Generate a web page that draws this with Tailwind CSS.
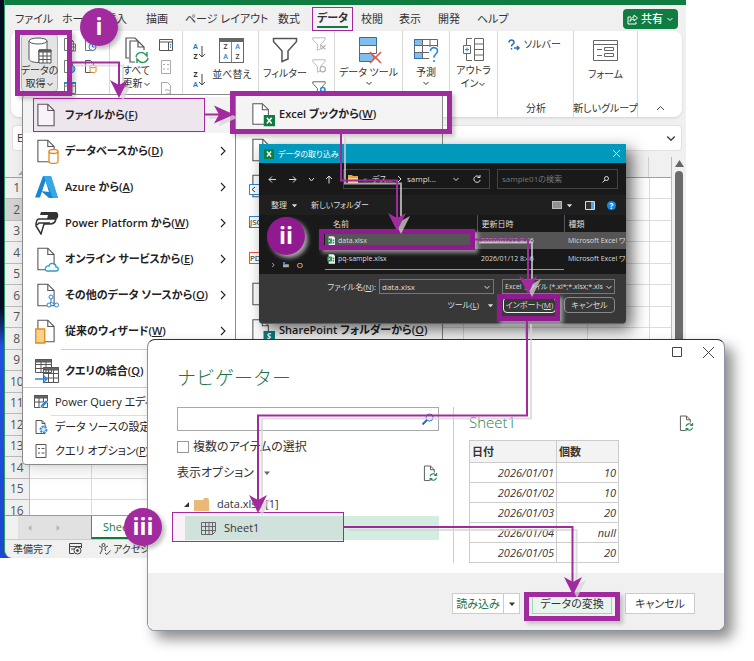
<!DOCTYPE html>
<html lang="ja">
<head>
<meta charset="utf-8">
<title>Excel ブックからデータを取り込む手順</title>
<script src="https://cdn.jsdelivr.net/npm/@tailwindcss/browser@4"></script>
</head>
<body class="bg-white text-[#333] font-['Open_Sans','Noto_Sans_CJK_JP',sans-serif] [font-feature-settings:'palt']">

<svg class="hidden" aria-hidden="true">
  <symbol id="doc" viewBox="0 0 20 26"><path d="M1 1h11l7 7v17H1z" fill="#fff" stroke="#555" stroke-width="1.2"/><path d="M12 1v7h7" fill="none" stroke="#555" stroke-width="1.2"/></symbol>
  <symbol id="down" viewBox="0 0 8 8"><path d="M1.500 3 4 5.500l2.500-2.500" fill="none" stroke="currentColor"/></symbol>
  <symbol id="right" viewBox="0 0 8 12"><path d="M2 2l4 4-4 4" fill="none" stroke="currentColor" stroke-width="1.100"/></symbol>
  <symbol id="caret" viewBox="0 0 8 8"><path d="M1 2.500h6L4 6z" fill="currentColor"/></symbol>
  <symbol id="xl" viewBox="0 0 12 12"><path d="M0 0h12v12H0z" fill="#107c41"/><path d="M3.500 3l5 6m0-6l-5 6" stroke="#fff" stroke-width="1.600"/></symbol>
  <symbol id="funnel" viewBox="0 0 26 26"><path d="M1.500 1.500h23v3L16 14v8l-6 2.500V14L1.500 4.500z" fill="none" stroke="currentColor" stroke-width="1.500"/></symbol>
  <symbol id="docsync" viewBox="0 0 16 18"><path d="M7 16.500H1.500V1H8l4 4v3M8 1v4h4" fill="none" stroke="#555"/><path d="M7.500 12a3.500 3.500 0 0 1 6-1.500M14.500 8.500v2.500H12M14.500 13.500a3.500 3.500 0 0 1-6 1.500M7.500 17v-2.500H10" fill="none" stroke="#2e8b57" stroke-width="1.200"/></symbol>
  <symbol id="sheetfile" viewBox="0 0 10 12"><path d="M2 0h6l2 2v10H2z" fill="#eee"/><path d="M0 3h6v6H0z" fill="#107c41"/><path d="M1.500 4.500l3 3m0-3l-3 3" stroke="#fff"/><path d="M7 4h2v2H7zm0 3h2v2H7z" fill="#21a366"/></symbol>
</svg>

<main class="relative w-full min-h-[661px] overflow-hidden">

  <!-- Desktop and Excel window -->
  <div class="absolute left-0 top-0 w-[686px] h-[558px] pl-1 bg-linear-to-b from-[#070b22] from-55% via-[#2350e0] via-62% to-[#1b48d0]">
    <section class="h-full flex flex-col bg-[#f0f0f0] border-l border-[#2b9a63] rounded-bl-lg overflow-hidden" aria-label="Excel">
      <div class="h-[5px] shrink-0 bg-[#107c41]"></div>

      <nav class="h-[26px] shrink-0 flex items-center pl-[10px] pr-2 pt-[2px] text-[11px] leading-4 whitespace-nowrap">
        <a href="#" class="w-[47px]">ファイル</a>
        <a href="#" class="w-[43px]">ホーム</a>
        <a href="#" class="w-[41px]">挿入</a>
        <a href="#" class="w-[39px]">描画</a>
        <a href="#" class="w-[93px]">ページ レイアウト</a>
        <a href="#" class="w-[34px]">数式</a>
        <a href="#" class="w-[41px] h-6 mr-2 border border-[#a12a9e] bg-[#f5f1f5] flex justify-center items-center font-bold"><span class="border-b-2 border-[#107c41]">データ</span></a>
        <a href="#" class="w-[38px]">校閲</a>
        <a href="#" class="w-[39px]">表示</a>
        <a href="#" class="w-[39px]">開発</a>
        <a href="#">ヘルプ</a>
        <button class="ml-auto h-5 w-[55px] rounded bg-[#107c41] text-white flex items-center justify-center gap-[3px] font-medium">
          <svg class="size-[11px]" viewBox="0 0 11 11" fill="none" stroke="#fff"><path d="M4 3H1v7h8V8M3 7.500c0-3 2-4.500 4-4.500V1l3.500 3L7 7V5C5.500 5 4 5.500 3 7.500z"/></svg>共有<svg class="size-2"><use href="#down"/></svg>
        </button>
      </nav>

      <div class="ml-[6px] mr-1 h-[86px] shrink-0 flex bg-white rounded-lg shadow text-[10px] leading-[13px] whitespace-nowrap">
        <div class="w-[98px] shrink-0 flex pl-[10px] pt-[3px]">
          <button class="w-[37px] h-[58px] bg-[#e4e4e4] border border-[#b5b5b5] rounded-sm flex flex-col items-center pt-[2px]">
            <svg class="w-6 h-[27px] shrink-0" viewBox="0 0 24 27" fill="#fff" stroke="#555"><path d="M1 4v18c0 2 4 3.500 9 3.500h1V13h8V4"/><ellipse cx="10" cy="4" rx="9" ry="3"/><path d="M11 13h12v13H11zM11 19h12M11 22.500h12M15 13v13M19 13v13"/><path d="M11 13h12v2H11z" fill="#666"/></svg>
            <span>データの</span><span class="flex items-center">取得<svg class="size-2"><use href="#down"/></svg></span>
          </button>
          <div class="ml-[6px] mt-1 grid grid-cols-2 gap-x-[9px] gap-y-2 content-start">
            <svg class="w-3 h-[14px]" viewBox="0 0 12 14" fill="#fff" stroke="#777"><path d="M.5.5h6l3 3v9h-9zM6.500.5v3h3M4 6h7.500v7H4zM4 9h7.500M7.500 6v7"/></svg>
            <svg class="w-3 h-[14px]" viewBox="0 0 12 14" fill="#fff" stroke="#777"><path d="M.5.5h5l3 3v9h-8z"/><circle cx="7.500" cy="9" r="3.500" stroke="#2b88d8"/><path d="M7.500 7v2h2" stroke="#2b88d8"/></svg>
            <svg class="w-3 h-[14px]" viewBox="0 0 12 14" fill="#fff" stroke="#777"><path d="M.5.5h5l3 3v9h-8z"/><circle cx="7.500" cy="9" r="3.500" fill="#9bd" stroke="#2b88d8"/></svg>
            <svg class="w-3 h-[14px]" viewBox="0 0 12 14" fill="#fff" stroke="#555"><path d="M.5.5h5l3 3v9h-8z"/><path d="M5 6.500v5c0 1.500 6 1.500 6 0v-5" stroke="#e08a1e"/><ellipse cx="8" cy="6.500" rx="3" ry="1.300" stroke="#e08a1e"/></svg>
            <svg class="w-3 h-3" viewBox="0 0 12 12" fill="#fff" stroke="#777"><path d="M.5.5h11v11H.5zM.5 4h11M4 0v12M8 0v12"/><path d="M0 0h12v2H0z" fill="#2b88d8" stroke="none"/></svg>
          </div>
        </div>
        <div class="w-[73px] shrink-0 flex pt-[6px] pl-3 border-l border-[#d8d8d8] gap-2">
          <button class="w-[29px] h-[58px] flex flex-col items-center">
            <svg class="w-6 h-[27px] shrink-0" viewBox="0 0 24 27" fill="none" stroke="#555" stroke-width="1.200"><path d="M4 21H1V1h9l3 3M10 25H5V4h8l6 6v3M13 4v6h6"/><path d="M11 20c1-5 7-6 10-2l1 1v-4M23 21c-1 5-7 6-10 2l-1-1v4" stroke="#2e9a5c" stroke-width="1.500"/></svg>
            <span>すべて</span><span class="flex items-center">更新<svg class="size-2"><use href="#down"/></svg></span>
          </button>
          <div class="flex flex-col gap-2 pt-[2px]">
            <svg class="w-[15px] h-[13px]" viewBox="0 0 15 13" fill="#fff" stroke="#555"><path d="M.5.5h13v11H.5zM.5 3h13M9.500 3v8.500"/><path d="M11.500 5v5" stroke="#2b88d8" stroke-dasharray="1.500 1"/></svg>
            <svg class="w-[15px] h-[14px]" viewBox="0 0 15 14" fill="#fff" stroke="#aaa"><path d="M2.500.5h9v13h-9zM4 4.500h2m2 0h2M4 9h2m2 0h2"/></svg>
            <svg class="w-[15px] h-[13px]" viewBox="0 0 15 13" fill="#fff" stroke="#aaa"><path d="M2.500.5h6l3 3v9h-9z"/><path d="M6 8h3c3 0 3 4 0 4H7" /></svg>
          </div>
        </div>
        <div class="w-[76px] shrink-0 flex border-l border-[#d8d8d8] pt-[7px] pl-[10px] gap-1">
          <div class="flex flex-col gap-2 pt-[4px]">
            <button class="flex items-center text-[7px] leading-[10px] font-bold"><span class="flex flex-col"><span class="text-[#1f7fc4]">A</span><span>Z</span></span><svg class="w-2 h-4" viewBox="0 0 8 16" fill="none" stroke="#444"><path d="M4 2v11M1 10l3 3 3-3"/></svg></button>
            <button class="flex items-center text-[7px] leading-[10px] font-bold"><span class="flex flex-col"><span>Z</span><span class="text-[#1f7fc4]">A</span></span><svg class="w-2 h-4" viewBox="0 0 8 16" fill="none" stroke="#444"><path d="M4 2v11M1 10l3 3 3-3"/></svg></button>
          </div>
          <button class="flex flex-col items-center h-[50px] w-[44px]">
            <span class="w-[25px] h-[25px] mb-[5px] shrink-0 border border-t-4 border-[#666] grid grid-cols-2 text-[7px] leading-[10px] font-semibold"><span class="border-r border-[#888]">Z</span><span class="text-[#1f7fc4]">A</span><span class="border-r border-[#888] text-[#1f7fc4]">A</span><span>Z</span></span>
            <span>並べ替え</span>
          </button>
        </div>
        <div class="w-[76px] shrink-0 flex border-l border-[#d8d8d8] pt-[6px] pl-[5px] gap-[6px]">
          <button class="flex flex-col items-center w-[42px] h-[50px]"><svg class="size-[26px] mb-1 shrink-0 text-[#555]"><use href="#funnel"/></svg><span>フィルター</span></button>
          <div class="flex flex-col gap-2">
            <svg class="size-[14px] text-[#aaa]" viewBox="0 0 26 26"><use href="#funnel"/><path d="M17 15l8 8m0-8l-8 8" stroke="#aaa" stroke-width="2"/></svg>
            <svg class="size-[14px] text-[#aaa]" viewBox="0 0 26 26"><use href="#funnel"/><circle cx="20" cy="19" r="5" fill="#fff" stroke="#aaa" stroke-width="2"/></svg>
            <svg class="size-[14px] text-[#444]" viewBox="0 0 26 26"><use href="#funnel"/><circle cx="20" cy="16" r="4" fill="#fff" stroke="#2b88d8" stroke-width="3"/></svg>
          </div>
        </div>
        <button class="w-[68px] shrink-0 h-[86px] flex flex-col items-center border-l border-[#d8d8d8] pt-[6px]">
          <svg class="w-[26px] h-[27px] mb-[2px] shrink-0" viewBox="0 0 26 27" fill="#83bdec" stroke="#2f6fb0"><path d="M3.500.5h17v8h-17zM3.500 16.500h12l3 5-3 3h-12z"/><path d="M3.500 8.500h17v8h-17z" fill="#fff" stroke="#666"/><path d="M14 15l11 11M25 15L14 26" stroke="#e8543f" stroke-width="1.600"/></svg>
          <span>データ ツール</span><svg class="size-2"><use href="#down"/></svg>
        </button>
        <button class="w-[47px] shrink-0 h-[86px] flex flex-col items-center border-l border-[#d8d8d8] pt-[6px]">
          <svg class="w-[27px] h-[27px] mb-[2px] shrink-0" viewBox="0 0 27 27" fill="#fff" stroke="#666"><path d="M1.500 2.500h23v19h-23z"/><path d="M1.500 2.500h8v6h-8zM1.500 15.500h8v6h-8z" fill="#83bdec" stroke="#2f6fb0"/><path d="M9.500 2.500v19M17 2.500v19M1.500 8.500h23M1.500 15.500h23"/><path d="M16 10h10v16H16z" stroke="none"/><path d="M17.500 14c0-5 7-4 7 0 0 3-3.500 3-3.500 6.500M21 23v2" fill="none" stroke="#2b88d8" stroke-width="1.600"/></svg>
          <span>予測</span><svg class="size-2"><use href="#down"/></svg>
        </button>
        <button class="w-[48px] shrink-0 h-[86px] flex flex-col items-center border-l border-[#d8d8d8] pt-[6px]">
          <svg class="w-6 h-[27px] shrink-0" viewBox="0 0 24 27" fill="none" stroke="#666"><path d="M12.500 1.500h9v22h-9zM12.500 7h9M12.500 12.500h9M12.500 18h9M10 1.500H4.500V8M4.500 17v6.500H10M1.500 8.500h7v8h-7z"/><path d="M3 12.500h4M5 10.500v4" stroke="#2b88d8"/></svg>
          <span>アウトラ</span><span class="flex items-center">イン<svg class="size-2"><use href="#down"/></svg></span>
        </button>
        <div class="w-[76px] shrink-0 flex flex-col justify-between border-l border-[#d8d8d8] pt-[7px] pb-[2px] pl-[10px]">
          <button class="flex items-center gap-1"><svg class="w-3 h-3" viewBox="0 0 12 12" fill="none" stroke="#2a6cb8" stroke-width="1.500"><path d="M1 3.500C1 0 6 .5 6 3.500 6 5.500 3.500 5 3.500 7.500M3.500 9v1.500M6 9h5M9 7l2 2-2 2"/></svg>ソルバー</button>
          <span class="ml-[18px]">分析</span>
        </div>
        <div class="w-[65px] shrink-0 flex flex-col items-center justify-between border-l border-r border-[#d8d8d8] pt-[9px] pb-[2px]">
          <button class="flex flex-col items-center"><svg class="w-[25px] h-[21px] mb-[7px]" viewBox="0 0 25 21" fill="#fff" stroke="#666"><path d="M.5.5h24v20H.5zM.5 4.500h24M4 9.500h5M4 15.500h5M11.500 7.500h9v3h-9zM11.500 13.500h9v3h-9z"/></svg>フォーム</button>
          <span>新しいグループ</span>
        </div>
        <button class="flex-1 flex items-end justify-center pb-1" aria-label="リボンを折りたたむ"><svg class="w-[9px] h-[9px]" viewBox="0 0 9 9" fill="none" stroke="#444"><path d="M1 6l3.500-3.500L8 6"/></svg></button>
      </div>

      <div class="ml-[7px] mr-1 mt-2 h-[26px] shrink-0 flex items-center justify-between bg-white rounded border border-[#e0e0e0] px-1 text-[11px]">
        <span>E1</span><svg class="w-[12px] h-[12px] text-[#444]"><use href="#down"/></svg>
      </div>

      <div class="flex-1 min-h-0 flex mt-[6px]">
        <div class="flex-1 min-w-0 overflow-hidden">
          <div class="h-[21px] flex border-b border-[#a0a0a0]"><span class="w-[24px] h-full flex items-end justify-end p-[2px]"><span class="size-[9px] bg-[#aaa] [clip-path:polygon(100%_0,100%_100%,0_100%)]"></span></span><span class="flex-1 h-full bg-[repeating-linear-gradient(90deg,transparent_0_61px,#cfcfcf_61px_62px)]"></span></div>
          <table class="w-full h-[344px] table-fixed border-collapse bg-white text-[12px] leading-[14px]"><tbody id="rows"></tbody></table>
        </div>
        <div class="w-[15px] flex flex-col items-center border-l border-[#bbb] pt-[3px]">
          <svg class="w-[9px] h-[7px] shrink-0" viewBox="0 0 9 7"><path d="M4.500 0L9 7H0z" fill="#666"/></svg>
          <span class="flex-1 w-2 mt-[4px] rounded-t bg-[#6b6b6b]"></span>
        </div>
      </div>

      <div class="h-6 shrink-0 flex border-t border-[#999] text-[11px]">
        <span class="ml-[13px] w-[73px] bg-[#e1e1e1] flex items-center gap-5 pl-2 text-[#b5b5b5]"><svg class="size-2 rotate-90"><use href="#caret"/></svg><svg class="size-2 -rotate-90"><use href="#caret"/></svg></span>
        <a href="#" class="w-[90px] bg-white border-l border-b-2 border-l-[#777] border-b-[#107c41] text-[#107c41] pl-[11px] leading-[22px]">Sheet1</a>
      </div>
      <div class="h-[19px] shrink-0 flex items-center border-t border-[#ccc] pl-2 gap-4 text-[10px] leading-4">
        <span>準備完了</span>
        <svg class="w-[13px] h-3" viewBox="0 0 13 12" fill="none" stroke="#444"><path d="M5 10.500H.5V.5h12V5M.5 3.500h12M2 6h3"/><circle cx="8.500" cy="7.500" r="3.500"/><circle cx="8.500" cy="7.500" r="1" fill="#444"/></svg>
        <span class="flex items-center gap-[2px]"><svg class="w-[13px] h-3" viewBox="0 0 13 12" fill="none" stroke="#444"><circle cx="5.500" cy="2" r="1.500"/><path d="M1 3l3 1.500V7l-2 4M10 3L7 4.500V7l1 1M7 10l2 1.500 3.500-4"/></svg>アクセシビリティ</span>
      </div>
    </section>
  </div>

  <!-- Get-data menu -->
  <div class="absolute left-[22px] top-[94px] w-[214px] bg-white border border-[#8a8a8a] rounded-sm shadow-lg pb-[1px] text-[11px] leading-4 font-semibold text-[#222] whitespace-nowrap" role="menu">
    <div class="pt-[2px]">
      <button class="w-full h-9 flex items-center gap-[6px] pl-3 pr-2 bg-[#f3f3f3]"><svg class="w-6 h-[26px] shrink-0" viewBox="0 0 24 26"><use href="#doc" x="2" width="18" height="26"/></svg><span>ファイルから(<u>F</u>)</span></button>
      <button class="w-full h-9 flex items-center gap-[6px] pl-3 pr-2"><svg class="w-6 h-[26px] shrink-0" viewBox="0 0 24 26"><use href="#doc" x="2" width="18" height="26"/><path d="M14 13.500v10c0 2.500 9 2.500 9 0v-10" fill="#fff" stroke="#e08a1e" stroke-width="1.300"/><ellipse cx="18.500" cy="13.500" rx="4.500" ry="2" fill="#fff" stroke="#e08a1e" stroke-width="1.300"/></svg><span>データベースから(<u>D</u>)</span><svg class="w-2 h-3 ml-auto"><use href="#right"/></svg></button>
      <button class="w-full h-9 flex items-center gap-[6px] pl-3 pr-2"><svg class="w-6 h-6 shrink-0" viewBox="0 0 24 24"><path d="M8 1h8l7 22h-9L6 16l8 1L10.500 6 5 22.500H0z" fill="#1a86d0"/><path d="M8.500 1H16L23 23h-5z" fill="#35a8e8"/></svg><span>Azure から(<u>A</u>)</span><svg class="w-2 h-3 ml-auto"><use href="#right"/></svg></button>
      <button class="w-full h-9 flex items-center gap-[6px] pl-3 pr-2"><svg class="w-6 h-6 shrink-0" viewBox="0 0 24 24"><path d="M6 1h15c3 0 3 7 0 7H12l1-4H5z" fill="#333"/><path d="M4 8h17c-1 5-4 5-6 5H9l-3 10-5-8c0-4 1-7 3-7zM2 14l2-2h11" fill="#fff" stroke="#333" stroke-width="1.500"/></svg><span>Power Platform から(<u>W</u>)</span><svg class="w-2 h-3 ml-auto"><use href="#right"/></svg></button>
      <button class="w-full h-9 flex items-center gap-[6px] pl-3 pr-2"><svg class="w-6 h-[26px] shrink-0" viewBox="0 0 24 26"><use href="#doc" x="2" width="18" height="26"/><path d="M12 25h9c3 0 3-4 0-4 0-4-6-5-7-1-4-1-5 5-2 5z" fill="#fff" stroke="#2b9bd8" stroke-width="1.300"/></svg><span>オンライン サービスから(<u>E</u>)</span><svg class="w-2 h-3 ml-auto"><use href="#right"/></svg></button>
      <button class="w-full h-9 flex items-center gap-[6px] pl-3 pr-2"><svg class="w-6 h-[26px] shrink-0" viewBox="0 0 24 26"><use href="#doc" x="2" width="18" height="26"/><path d="M16 16v4l-3 3m3-3 5 3" stroke="#2b88d8" fill="none"/><g fill="#fff" stroke="#2b88d8"><circle cx="16" cy="15" r="2"/><circle cx="14" cy="23" r="2"/><circle cx="21.500" cy="23" r="2"/></g></svg><span>その他のデータ ソースから(<u>O</u>)</span><svg class="w-2 h-3 ml-auto"><use href="#right"/></svg></button>
      <button class="w-full h-9 flex items-center gap-[6px] pl-3 pr-2"><svg class="w-6 h-[26px] shrink-0" viewBox="0 0 24 26"><use href="#doc" x="2" width="18" height="26"/><path d="M.7 11h9v14h-9z" fill="#fbd08a" stroke="#e08a1e" stroke-width="1.300"/></svg><span>従来のウィザード(<u>W</u>)</span><svg class="w-2 h-3 ml-auto"><use href="#right"/></svg></button>
    </div>
    <button class="w-full h-[38px] flex items-center gap-[6px] pl-3 pr-2 pt-[5px] bg-[linear-gradient(#ccc,#ccc)] bg-[length:100%_1px] bg-no-repeat bg-[position:38px_0]"><svg class="w-6 h-[26px] shrink-0" viewBox="0 0 24 26" fill="#fff" stroke="#555"><path d="M.5 1.500h16v13H.5zM.5 6.500h16M.5 10.500h16M6 1.500v13M11 1.500v13M8.500 9.500h15v15h-15zM8.500 15.500h15M8.500 20h15M13.500 9.500v15M18.500 9.500v15"/><path d="M.5 1.500h16V4H.5zM8.500 9.500h15V12h-15z" fill="#666"/><path d="M0 21h12M8 17l4 4-4 4" fill="none" stroke="#2b88d8" stroke-width="1.300"/></svg><span>クエリの結合(<u>Q</u>)</span></button>
    <button class="w-full h-7 flex items-center gap-[7px] pl-[11px] border-t border-[#ccc] font-normal"><svg class="w-[14px] h-[14px] shrink-0" viewBox="0 0 14 14" fill="#fff" stroke="#555"><path d="M.5.5h13v12H.5zM.5 7h13M5 3v9.500M9.500 3v9.500"/><path d="M.5.5h13V3H.5z" fill="#666"/><path d="M6 13l1-3 5-5 2 2-5 5z" fill="#2b88d8" stroke="#fff" stroke-width=".5"/></svg><span>Power Query エディターの起動</span></button>
    <button class="w-full h-6 flex items-center gap-[7px] pl-[11px] font-normal bg-[linear-gradient(#ddd,#ddd)] bg-[length:100%_1px] bg-no-repeat bg-[position:28px_0]"><svg class="w-[14px] h-[14px] shrink-0" viewBox="0 0 14 14" fill="#fff" stroke="#555"><path d="M2 .5h6l3 3v10H2zM8 .5v3h3"/><circle cx="9.500" cy="9.500" r="3" fill="#cce6fa" stroke="#2b88d8" stroke-width="2" stroke-dasharray="2 1"/></svg><span>データ ソースの設定(<u>S</u>)...</span></button>
    <button class="w-full h-6 flex items-center gap-[7px] pl-[11px] font-normal"><svg class="w-[14px] h-[14px] shrink-0" viewBox="0 0 14 14" fill="#fff" stroke="#555"><path d="M2 .5h10v13H2zM4 4.500h2m1.500 0h3M4 9h2m1.500 0h3"/></svg><span>クエリ オプション(<u>P</u>)</span></button>
  </div>

  <!-- From-file submenu -->
  <div class="absolute left-[235px] top-[95px] w-[208px] h-[260px] bg-white border border-[#8a8a8a] text-[11px] leading-4 font-semibold text-[#222] whitespace-nowrap" role="menu">
    <button class="w-full h-9 flex items-center gap-1 pl-4 bg-[#f4f4f4]"><svg class="w-[23px] h-[26px] shrink-0" viewBox="0 0 24 26"><use href="#doc" width="18" height="26"/><use href="#xl" x="12" y="14" width="12" height="12"/></svg><span>Excel ブックから(<u>W</u>)</span></button>
    <div class="h-9 flex items-center pl-4"><svg class="w-[18px] h-6"><use href="#doc"/></svg></div>
    <div class="h-9 flex items-center pl-[13px]"><svg class="w-6 h-6" viewBox="0 0 24 24"><use href="#doc" x="3" width="18" height="24"/><path d="M.5 10.500h20v10H.5z" fill="#fff" stroke="#2b88d8"/><path d="M6 13l-3 2.500L6 18" fill="none" stroke="#333"/></svg></div>
    <div class="h-9 flex items-center pl-[13px]"><span class="w-6 h-3 border border-[#2b88d8] bg-white text-[8px] leading-[10px] font-normal">JSON</span></div>
    <div class="h-9 flex items-center pl-[13px]"><span class="w-6 h-3 border border-[#e8543f] bg-white text-[8px] leading-[10px] font-normal">PDF</span></div>
    <div class="h-9 flex items-center pl-4"><svg class="w-[18px] h-6"><use href="#doc"/></svg></div>
    <button class="w-full h-9 flex items-center gap-1 pl-4"><svg class="w-[23px] h-[26px] shrink-0" viewBox="0 0 24 26"><use href="#doc" width="18" height="26"/><path d="M12 14h12v12H12z" fill="#0b8080"/><path d="M20 17c-4-1-4 2-2 2.500s1 3-2 2" fill="none" stroke="#fff" stroke-width="1.400"/></svg><span>SharePoint フォルダーから(<u>O</u>)</span></button>
  </div>

  <!-- File import dialog -->
  <section class="absolute left-[259px] top-[144px] w-[367px] bg-[#383838] text-[#ddd] text-[8px] leading-[10px] whitespace-nowrap overflow-hidden rounded-b-sm border-b border-[#28788a] shadow-[6px_6px_16px_rgba(0,0,0,.6)]" aria-label="データの取り込み">
    <header class="h-[19px] bg-[#0099bc] flex items-center gap-1 pl-[5px] pr-[6px] text-white">
      <svg class="size-[10px]"><use href="#xl"/></svg>データの取り込み
      <button class="ml-auto" aria-label="閉じる"><svg class="size-[7px]" viewBox="0 0 7 7" stroke="#fff"><path d="M0 0l7 7M7 0L0 7"/></svg></button>
    </header>
    <div class="h-8 bg-[#191919] flex items-center pl-[9px] pr-2">
      <svg class="w-[66px] h-[9px]" viewBox="0 0 66 9" fill="none" stroke="#ddd"><path d="M8 4.500H1M4 1.500l-3 3 3 3"/><path d="M21 4.500h7M25 1.500l3 3-3 3"/><path d="M41 3l2.500 3L46 3"/><path d="M61 8.500V1M58 4l3-3 3 3"/></svg>
      <div class="ml-[9px] w-[147px] h-5 border border-[#444] flex items-center gap-[5px] px-1">
        <svg class="w-[10px] h-2" viewBox="0 0 10 8"><path d="M0 0h4l1 1h5v7H0z" fill="#e8a33d"/><path d="M0 3h10v5H0z" fill="#ffd27a"/></svg>
        <span>«</span><span>デス...</span><svg class="w-1 h-2" viewBox="0 0 4 8" fill="none" stroke="#ddd"><path d="M0 1l3 3-3 3"/></svg><span>sampl...</span>
        <svg class="size-2 ml-auto mr-2"><use href="#down"/></svg>
        <svg class="size-2 mr-1" viewBox="0 0 8 8" fill="none" stroke="#ddd"><path d="M6.500 2A3.200 3.200 0 1 0 7.200 5M7 0v2.500H4.500"/></svg>
      </div>
      <label class="ml-auto w-[121px] h-5 border border-[#444] flex items-center justify-between pl-1 pr-2">
        <input class="w-20 bg-transparent placeholder:text-[#777]" placeholder="sample01の検索" aria-label="検索">
        <svg class="size-[7px]" viewBox="0 0 7 7" fill="none" stroke="#ddd"><circle cx="4.500" cy="2.500" r="2"/><path d="M3 4L.5 6.500"/></svg>
      </label>
    </div>
    <div class="h-5 bg-[#1f1f1f] flex items-center pl-3 pr-[10px]">
      <button class="flex items-center gap-1">整理<svg class="size-[7px]"><use href="#caret"/></svg></button>
      <button class="ml-[13px]">新しいフォルダー</button>
      <svg class="ml-auto w-[10px] h-2" viewBox="0 0 10 8"><path d="M0 0h10v8H0z" fill="#bbb"/><path d="M1 2h8M1 4h8M1 6h8" stroke="#444" stroke-width=".7"/></svg>
      <svg class="size-[7px] ml-1 mr-3"><use href="#caret"/></svg>
      <svg class="w-[10px] h-[9px] mr-3" viewBox="0 0 10 9"><path d="M.5.5h9v8h-9z" fill="#333" stroke="#ddd"/><path d="M6 1h3v7H6z" fill="#4aa8f0"/></svg>
      <span class="size-[9px] rounded-full bg-[#1a86e0] text-white text-center leading-[9px] font-bold">?</span>
    </div>
    <div class="h-[59px] bg-[#191919] flex">
      <div class="w-[44px] shrink-0 pl-[13px] flex flex-col justify-end pb-1">
        <span class="flex items-center gap-2"><svg class="w-1 h-2" viewBox="0 0 4 8" fill="none" stroke="#ddd"><path d="M0 1l3 3-3 3"/></svg><svg class="w-2 h-2" viewBox="0 0 8 8"><path d="M0 3h8v4H0z" fill="#aaa"/><path d="M0 0h3v3H0z" fill="#2b88d8"/></svg>O</span>
      </div>
      <div class="ml-[22px] flex-1 min-w-0">
        <table class="w-full table-fixed text-left">
          <thead><tr class="h-[17px]"><th class="w-[152px] pl-2 font-normal">名前</th><th class="w-[87px] pl-1 font-normal border-l border-[#555]">更新日時</th><th class="pl-1 font-normal border-l border-[#555]">種類</th></tr></thead>
          <tbody class="text-[7px]">
            <tr class="h-[17px] bg-[#555]"><td class="pl-[2px]"><span class="flex items-center gap-[3px]"><svg class="w-2 h-[10px]"><use href="#sheetfile"/></svg>data.xlsx</span></td><td class="pl-1">2026/01/12 8:46</td><td class="pl-1">Microsoft Excel ワ..</td></tr>
            <tr class="h-[19px]"><td class="pl-[2px]"><span class="flex items-center gap-[3px]"><svg class="w-2 h-[10px]"><use href="#sheetfile"/></svg>pq-sample.xlsx</span></td><td class="pl-1">2026/01/12 8:46</td><td class="pl-1">Microsoft Excel ワ..</td></tr>
          </tbody>
        </table>
        <div class="w-[239px] h-[2px] border-b border-[#999]"></div>
      </div>
    </div>
    <div class="h-[49px] pt-[5px] pr-[11px] flex flex-col gap-[3px]">
      <div class="flex items-center justify-end">
        <label for="fname" class="mr-[3px]">ファイル名(<u>N</u>):</label>
        <span class="w-[115px] h-[15px] border border-[#777] flex items-center justify-between px-[2px]"><input id="fname" value="data.xlsx" class="w-20 bg-transparent"><svg class="size-2"><use href="#down"/></svg></span>
        <span class="ml-2 w-[113px] h-[15px] border border-[#777] flex items-center"><select aria-label="ファイルの種類" class="appearance-none w-[100px] pl-[2px] bg-transparent text-[7px]"><option>Excel ファイル (*.xl*;*.xlsx;*.xlsm;*.xlsb)</option></select><svg class="size-2 ml-auto mr-[1px]"><use href="#down"/></svg></span>
      </div>
      <div class="flex items-center justify-end">
        <button class="flex items-center gap-2"><span>ツール(<u>L</u>)</span><svg class="size-[7px]"><use href="#caret"/></svg></button>
        <button class="ml-[9px] w-[53px] h-4 border border-[#eee] rounded-sm">インポート(<u>M</u>)</button>
        <button class="ml-2 w-[51px] h-4 border border-[#888] rounded-sm">キャンセル</button>
      </div>
    </div>
  </section>

  <!-- Navigator dialog -->
  <section class="absolute left-[147px] top-[339px] w-[578px] flex flex-col bg-white border border-[#8b93a3] border-t-[#26324c] rounded-[8px] overflow-hidden shadow-[8px_8px_14px_rgba(0,0,0,.45)] whitespace-nowrap text-[12px] leading-4" aria-label="ナビゲーター">
    <div class="h-[18px] flex items-end justify-end gap-5 pr-[10px]">
      <button aria-label="最大化"><svg class="size-[11px]" viewBox="0 0 11 11" fill="none" stroke="#444"><path d="M.5.500h9v9h-9z"/></svg></button>
      <button aria-label="閉じる"><svg class="size-[11px]" viewBox="0 0 11 11" fill="none" stroke="#444"><path d="M0 0l11 11M11 0L0 11"/></svg></button>
    </div>
    <h1 class="pl-[29px] mt-2 text-[19px] leading-6 font-light text-[#217346] [font-feature-settings:normal]">ナビゲーター</h1>
    <div class="flex mt-[17px] h-[156px]">
      <div class="w-[306px] shrink-0 pr-[14px] pl-[29px] border-r border-[#ccc] flex flex-col">
        <label class="h-6 border border-[#a8a8a8] flex items-center px-1 shrink-0">
          <input class="flex-1 min-w-0" aria-label="検索">
          <svg class="size-3" viewBox="0 0 12 12" fill="none" stroke="#2f6db5"><circle cx="7.500" cy="4.500" r="3.500"/><path d="M5 7L.5 11.500" stroke-width="2"/></svg>
        </label>
        <label class="mt-2 flex items-center gap-1"><input type="checkbox" class="appearance-none size-3 border border-[#999] bg-white">複数のアイテムの選択</label>
        <div class="mt-[9px] h-[18px] flex items-center justify-between pr-[1px]">
          <button class="flex items-center gap-[9px]">表示オプション<svg class="size-2 text-[#666]"><use href="#caret"/></svg></button>
          <button aria-label="更新"><svg class="w-[15px] h-[17px]"><use href="#docsync"/></svg></button>
        </div>
        <div class="mt-[10px] h-6 flex items-center pl-[6px] gap-1">
          <svg class="size-[7px]" viewBox="0 0 7 7"><path d="M6 1v5H1z" fill="#333"/></svg>
          <svg class="w-[15px] h-[13px]" viewBox="0 0 15 13"><path d="M0 2h9l1-2h4l1 2v11H0z" fill="#ecb878"/></svg>
          <span class="ml-1 text-[11px]">data.xlsx [1]</span>
        </div>
        <a href="#" class="ml-2 h-6 flex items-center gap-2 pl-4 bg-[#d3eee0] text-[11px]">
          <svg class="w-[15px] h-[13px]" viewBox="0 0 15 13" fill="none" stroke="#666"><path d="M.5.5h14v9l-3 3H.5zM.5 4.500h14M.5 8.500h14M4.500 0v12M8 0v12M11.500 0v12"/></svg>Sheet1
        </a>
      </div>
      <div class="flex-1 pl-[15px] pr-[30px] flex flex-col">
        <div class="flex justify-between items-center h-[33px] pb-1">
          <h2 class="text-[15px] font-light text-[#2d7a50]">Sheet1</h2>
          <button class="pt-1" aria-label="更新"><svg class="w-[15px] h-[17px]"><use href="#docsync"/></svg></button>
        </div>
        <table class="w-[150px] table-fixed border-collapse text-[11px] leading-[14px] italic text-right [&_td]:border [&_td]:border-[#ccc] [&_td]:h-[20px] [&_td]:px-[2px] [&_th]:border [&_th]:border-[#ccc] [&_th]:h-[22px] [&_th]:px-[2px]">
          <colgroup><col class="w-[87px]"><col></colgroup>
          <thead><tr class="bg-[#f3f3f3] not-italic text-left"><th>日付</th><th>個数</th></tr></thead>
          <tbody>
            <tr><td>2026/01/01</td><td>10</td></tr>
            <tr><td>2026/01/02</td><td>10</td></tr>
            <tr><td>2026/01/03</td><td>20</td></tr>
            <tr><td>2026/01/04</td><td>null</td></tr>
            <tr><td>2026/01/05</td><td>20</td></tr>
          </tbody>
        </table>
      </div>
    </div>
    <footer class="mt-[10px] h-[57px] bg-[#f0f0f0] flex justify-end items-center pr-[29px] pt-1 text-[11px]">
      <span class="flex h-[21px] border border-[#ccc] bg-white"><button class="w-[50px] text-[#217346]">読み込み</button><button class="w-4 border-l border-[#ccc] flex items-center justify-center" aria-label="読み込み先"><svg class="size-2"><use href="#caret"/></svg></button></span>
      <button class="ml-3 w-[80px] h-[21px] bg-[#e8f5ef] border border-[#9fd3bb]">データの変換</button>
      <button class="ml-[13px] w-[70px] h-[21px] bg-white border border-[#ccc]">キャンセル</button>
    </footer>
  </section>

  <!-- Step highlights and connecting arrows -->
  <div class="absolute left-[15px] top-[30px] w-[57px] h-[66px] border-5 border-[#a12a9e] shadow-[3px_3px_4px_rgba(0,0,0,.2)]"></div>
  <div class="absolute left-[33px] top-[98px] w-[172px] h-[34px] border border-[#a12a9e] bg-[#a12a9e]/6"></div>
  <div class="absolute left-[230px] top-[91px] w-[222px] h-[43px] border-5 border-[#a12a9e] shadow-[3px_3px_4px_rgba(0,0,0,.2)]"></div>
  <div class="absolute left-[319px] top-[229px] w-[156px] h-[21px] border-5 border-[#921a90] shadow-[3px_3px_4px_rgba(255,255,255,.5)]"></div>
  <div class="absolute left-[497px] top-[294px] w-[63px] h-[27px] border-5 border-[#921a90] shadow-[3px_3px_4px_rgba(255,255,255,.5)]"></div>
  <div class="absolute left-[172px] top-[512px] w-[172px] h-[30px] border border-[#a12a9e] bg-[#a12a9e]/6"></div>
  <div class="absolute left-[524px] top-[592px] w-[96px] h-[29px] border-5 border-[#a12a9e] shadow-[3px_3px_4px_rgba(0,0,0,.2)]"></div>

  <svg class="absolute left-0 top-0 w-[754px] h-[661px] pointer-events-none" viewBox="0 0 754 661" aria-hidden="true">
    <defs>
      <path id="head" d="M0 0l-9-18 9 5 9-5z"/>
      <g id="arrows" stroke-width="2">
        <path fill="none" d="M72 62.500h47V86M205 114.500h18M341 134v46.500h56V218M475 239.500h53V281M527 321v94.500H258V501M344 527h228.500V583"/>
        <g stroke="none">
          <use href="#head" x="119" y="98"/>
          <path d="M234 114.500l-20-9 5 9-5 9z"/>
          <use href="#head" x="397" y="231"/>
          <use href="#head" x="528" y="294"/>
          <use href="#head" x="258" y="513"/>
          <use href="#head" x="573" y="595"/>
        </g>
      </g>
    </defs>
    <use href="#arrows" x="4" y="3" class="stroke-[#d5d5d5] fill-[#d5d5d5]" opacity=".75"/>
    <use href="#arrows" class="stroke-[#a12a9e] fill-[#a12a9e]"/>
  </svg>

  <span class="absolute left-[80px] top-[8px] size-[38px] rounded-full bg-[#a12a9e] text-white text-[23px] leading-[36px] font-bold text-center shadow-[3px_3px_4px_rgba(0,0,0,.25)]">i</span>
  <span class="absolute left-[267px] top-[217px] size-[38px] rounded-full bg-[#921a90] text-white text-[23px] leading-[36px] font-bold text-center shadow-[3px_3px_4px_rgba(255,255,255,.6)]">ii</span>
  <span class="absolute left-[124px] top-[508px] size-[38px] rounded-full bg-[#a12a9e] text-white text-[23px] leading-[36px] font-bold text-center shadow-[3px_3px_4px_rgba(0,0,0,.25)]">iii</span>
</main>

<script>
  const body = document.getElementById('rows');
  for (let n = 1; n <= 16; n++) {
    const head = n === 2 ? 'bg-[#d2d2d2]' : 'bg-[#f0f0f0]';
    let html = `<th class="w-[24px] border-b border-r border-[#bbb] font-normal text-[#555] ${head}">${n}</th>`;
    for (let c = 0; c < 10; c++) html += '<td class="w-[62px] border-b border-r border-[#dcdcdc]"></td>';
    html += '<td class="border-b border-[#dcdcdc]"></td>';
    const row = document.createElement('tr');
    row.innerHTML = html;
    body.append(row);
  }
</script>
</body>
</html>
